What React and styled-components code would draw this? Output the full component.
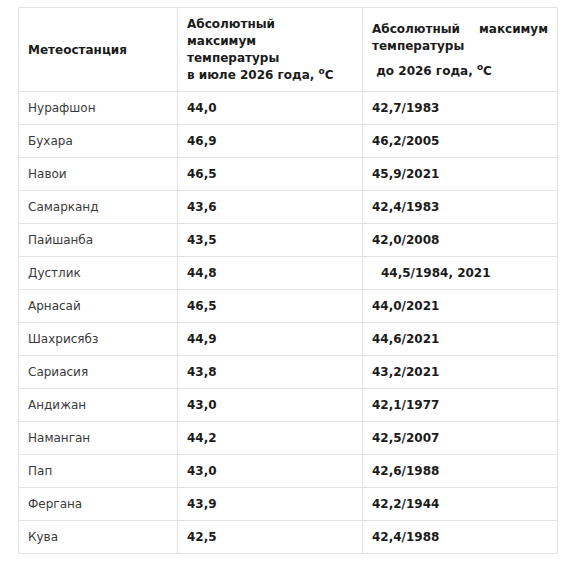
import React from 'react';
import styled, { createGlobalStyle } from 'styled-components';

const GlobalStyle = createGlobalStyle`
  body {
    margin: 0;
    background: #fff;
    font-family: 'DejaVu Sans', 'Noto Sans', sans-serif;
  }
`;

const rows = [
  ['Нурафшон', '44,0', '42,7/1983'],
  ['Бухара', '46,9', '46,2/2005'],
  ['Навои', '46,5', '45,9/2021'],
  ['Самарканд', '43,6', '42,4/1983'],
  ['Пайшанба', '43,5', '42,0/2008'],
  ['Дустлик', '44,8', '44,5/1984, 2021', true],
  ['Арнасай', '46,5', '44,0/2021'],
  ['Шахрисябз', '44,9', '44,6/2021'],
  ['Сариасия', '43,8', '43,2/2021'],
  ['Андижан', '43,0', '42,1/1977'],
  ['Наманган', '44,2', '42,5/2007'],
  ['Пап', '43,0', '42,6/1988'],
  ['Фергана', '43,9', '42,2/1944'],
  ['Кува', '42,5', '42,4/1988'],
];

const App = () => {
  return (
    <Page>
      <GlobalStyle />
      <Table>
        <colgroup>
          <col style={{ width: 159 }} />
          <col style={{ width: 185 }} />
          <col style={{ width: 195 }} />
        </colgroup>
        <thead>
          <tr>
            <HeadCell>Метеостанция</HeadCell>
            <HeadCell>
              Абсолютный
              <br />максимум
              <br />температуры
              <br />в июле 2026 года, <sup>о</sup>С
            </HeadCell>
            <HeadCell justify>
              <p>Абсолютный максимум температуры</p>
              <p>&nbsp;до 2026 года, <sup>о</sup>С</p>
            </HeadCell>
          </tr>
        </thead>
        <tbody>
          {rows.map(([station, july, record, shifted]) => (
            <tr key={station}>
              <Cell>{station}</Cell>
              <Cell bold>{july}</Cell>
              <Cell bold shifted={shifted}>{record}</Cell>
            </tr>
          ))}
        </tbody>
      </Table>
    </Page>
  );
};

const Page = styled.div`
  padding: 7px 0 0 18px;
`;

const Table = styled.table`
  border-collapse: collapse;
  table-layout: fixed;
  width: 540px;
  color: #1b1b1b;
`;

const HeadCell = styled.th`
  height: 82px;
  padding: 1px 9px 0;
  border: 1px solid #e3e3e6;
  text-align: ${({ justify }) => (justify ? 'justify' : 'left')};
  vertical-align: middle;
  font-size: 12px;
  font-weight: 700;
  line-height: 17px;

  p {
    margin: 0;
  }

  p + p {
    margin-top: 8px;
  }

  sup {
    font-size: 9px;
    line-height: 0;
    vertical-align: baseline;
    position: relative;
    top: -5px;
  }
`;

const Cell = styled.td`
  height: 32px;
  padding: 0 9px 0 ${({ shifted }) => (shifted ? '18px' : '9px')};
  border: 1px solid #e3e3e6;
  font-size: 12px;
  font-weight: ${({ bold }) => (bold ? 700 : 400)};
  color: ${({ bold }) => (bold ? '#1b1b1b' : '#3a3a3a')};
  text-align: left;
  vertical-align: middle;
`;

export default App;
